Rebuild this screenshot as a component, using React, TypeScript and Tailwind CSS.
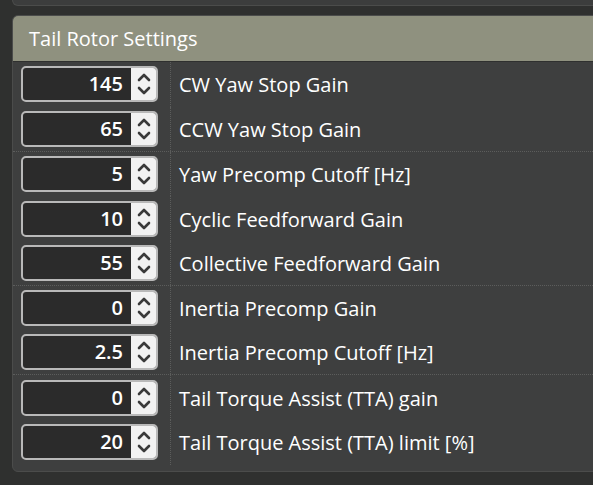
const rows: { v: string; label: string; sep?: boolean }[] = [
  { v: '145', label: 'CW Yaw Stop Gain' },
  { v: '65', label: 'CCW Yaw Stop Gain', sep: true },
  { v: '5', label: 'Yaw Precomp Cutoff [Hz]' },
  { v: '10', label: 'Cyclic Feedforward Gain' },
  { v: '55', label: 'Collective Feedforward Gain', sep: true },
  { v: '0', label: 'Inertia Precomp Gain' },
  { v: '2.5', label: 'Inertia Precomp Cutoff [Hz]', sep: true },
  { v: '0', label: 'Tail Torque Assist (TTA) gain' },
  { v: '20', label: 'Tail Torque Assist (TTA) limit [%]' },
]

function Spinner() {
  return (
    <div className="w-[25px] h-full bg-[#f2f2f2] rounded-r-[3px] flex flex-col items-center justify-center gap-[4px]">
      <svg width="14" height="9" viewBox="0 0 14 9" fill="none" stroke="#3a3a3a" strokeWidth="2.6" strokeLinecap="round" strokeLinejoin="round"><path d="M2 7 7 2l5 5" /></svg>
      <svg width="14" height="9" viewBox="0 0 14 9" fill="none" stroke="#3a3a3a" strokeWidth="2.6" strokeLinecap="round" strokeLinejoin="round"><path d="M2 2l5 5 5-5" /></svg>
    </div>
  )
}

export default function App() {
  return (
    <div className="w-[593px] h-[485px] overflow-hidden bg-[#2f302f] text-white" style={{ fontFamily: '"Open Sans", "Noto Sans", sans-serif' }}>
      {/* previous panel edge */}
      <div className="ml-[12px] w-[620px] h-[6px] bg-[#3c3d3d] border border-t-0 border-[#4b4c4b] rounded-bl-[6px]" />

      <div className="mt-[9px] ml-[12px] w-[620px] h-[457px] bg-[#3e3f3f] border border-[#4b4c4b] rounded-[6px] overflow-hidden">
        <div className="h-[46px] bg-[#8f917f] border-b border-[#2f302f] pl-[16px] flex items-center text-[20px] leading-none">
          Tail Rotor Settings
        </div>

        <div className="flex flex-col">
          {rows.map((r, i) => (
            <div
              key={i}
              className={`flex h-[44.75px] ${r.sep ? 'border-b border-dotted border-[#5c5d5c]' : ''}`}
            >
              <div className="w-[158px] shrink-0 flex items-center pl-[8px] border-r border-dotted border-[#5c5d5c]">
                <div className="w-[137px] h-[36px] flex border-2 border-[#b9b9b9] rounded-[5px] bg-[#2b2b2b]">
                  <div className="flex-1 flex items-center justify-end pr-[8px] text-[20px] font-semibold leading-none">
                    {r.v}
                  </div>
                  <Spinner />
                </div>
              </div>
              <div className="flex items-center pl-[8px] pt-[2px] text-[20px] leading-none">
                {r.label}
              </div>
            </div>
          ))}
        </div>
      </div>
    </div>
  )
}
